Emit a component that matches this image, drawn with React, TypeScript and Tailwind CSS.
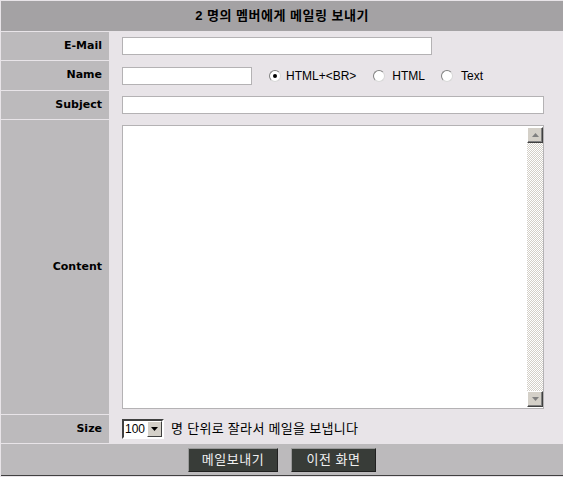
import type React from 'react';

const latin = "font-['DejaVu_Sans',sans-serif]";
const ko = "font-['Liberation_Sans','Noto_Sans_CJK_KR',sans-serif]";

const Label: React.FC<{ text: string }> = ({ text }) => (
  <div
    className={`w-[108px] shrink-0 bg-[#bcbabc] flex items-center justify-end pr-[7px] text-[11px] font-bold text-black ${latin}`}
  >
    {text}
  </div>
);

const Radio: React.FC<{ checked?: boolean }> = ({ checked }) => (
  <span className="relative inline-block w-[12px] h-[12px] rounded-full bg-white border border-t-[#808080] border-l-[#808080] border-r-[#d8d8d8] border-b-[#d8d8d8]">
    {checked && <span className="absolute left-[3px] top-[3px] w-[4px] h-[4px] rounded-full bg-black" />}
  </span>
);

const Arrow: React.FC<{ down?: boolean; color?: string }> = ({ down, color = '#808080' }) => (
  <svg width="7" height="4" viewBox="0 0 7 4">
    <path d={down ? 'M0 0 H7 L3.5 4 Z' : 'M3.5 0 L7 4 H0 Z'} fill={color} />
  </svg>
);

const ScrollButton: React.FC<{ down?: boolean }> = ({ down }) => (
  <div className="h-[16px] w-[16px] bg-[#d4d0c8] border border-t-white border-l-white border-r-[#404040] border-b-[#404040] shadow-[inset_-1px_-1px_#808080] flex items-center justify-center">
    <Arrow down={down} />
  </div>
);

export default function App() {
  return (
    <div className={`w-[563px] h-[477px] bg-[#e8e4e8] pt-px pl-px flex flex-col gap-px text-black ${ko}`}>
      <div className="h-[30px] bg-[#a4a2a4] flex items-center justify-center text-[13px] font-bold tracking-[0.5px]">
        2 명의 멤버에게 메일링 보내기
      </div>

      <div className="flex h-[28px]">
        <Label text="E-Mail" />
        <div className="flex-1 flex items-center pl-[13px]">
          <div className="w-[310px] h-[18px] bg-white border border-[#b4b2b4]" />
        </div>
      </div>

      <div className="flex h-[29px]">
        <Label text="Name" />
        <div className="flex-1 flex items-center pl-[13px] text-[12px]">
          <div className="w-[130px] h-[18px] bg-white border border-[#b4b2b4]" />
          <div className="flex items-center gap-[5px] ml-[17px]">
            <Radio checked />
            <span>HTML+&lt;BR&gt;</span>
          </div>
          <div className="flex items-center gap-[7px] ml-[17px]">
            <Radio />
            <span>HTML</span>
          </div>
          <div className="flex items-center gap-[8px] ml-[16px]">
            <Radio />
            <span>Text</span>
          </div>
        </div>
      </div>

      <div className="flex h-[28px]">
        <Label text="Subject" />
        <div className="flex-1 flex items-center pl-[13px]">
          <div className="w-[422px] h-[18px] bg-white border border-[#b4b2b4]" />
        </div>
      </div>

      <div className="flex h-[294px]">
        <Label text="Content" />
        <div className="flex-1 flex items-center pl-[13px]">
          <div className="w-[422px] h-[284px] bg-white border border-[#b4b2b4] flex justify-end py-px">
            <div className="w-[16px] flex flex-col">
              <ScrollButton />
              <div className="flex-1 bg-[repeating-conic-gradient(#d4d0c8_0_25%,#ffffff_0_50%)] bg-[length:2px_2px]" />
              <ScrollButton down />
            </div>
          </div>
        </div>
      </div>

      <div className="flex h-[28px]">
        <Label text="Size" />
        <div className="flex-1 flex items-center pl-[13px] gap-[7px] text-[13px]">
          <div className="w-[42px] h-[20px] bg-white border-2 border-t-[#404040] border-l-[#404040] border-r-white border-b-white flex items-center justify-between text-[12px]">
            <span className="pl-px leading-none">100</span>
            <div className="h-[16px] w-[15px] bg-[#d4d0c8] border border-t-white border-l-white border-r-[#404040] border-b-[#404040] flex items-center justify-center">
              <Arrow down color="#000000" />
            </div>
          </div>
          <span className="tracking-[0.3px]">명 단위로 잘라서 메일을 보냅니다</span>
        </div>
      </div>

      <div className="h-[31px] bg-[#bcbabc] flex items-center justify-center gap-[13px] text-[13px] text-[#f0f0f0]">
        <button
          type="button"
          className="w-[90px] h-[24px] bg-[#383c38] border border-t-[#9a9a9a] border-l-[#9a9a9a] border-r-[#202020] border-b-[#202020] flex items-center justify-center tracking-[0.5px]"
        >
          메일보내기
        </button>
        <button
          type="button"
          className="w-[85px] h-[24px] bg-[#383c38] border border-t-[#9a9a9a] border-l-[#9a9a9a] border-r-[#202020] border-b-[#202020] flex items-center justify-center tracking-[0.5px]"
        >
          이전 화면
        </button>
      </div>
      <div className="h-px bg-[#404040] -mt-px" />
    </div>
  );
}
